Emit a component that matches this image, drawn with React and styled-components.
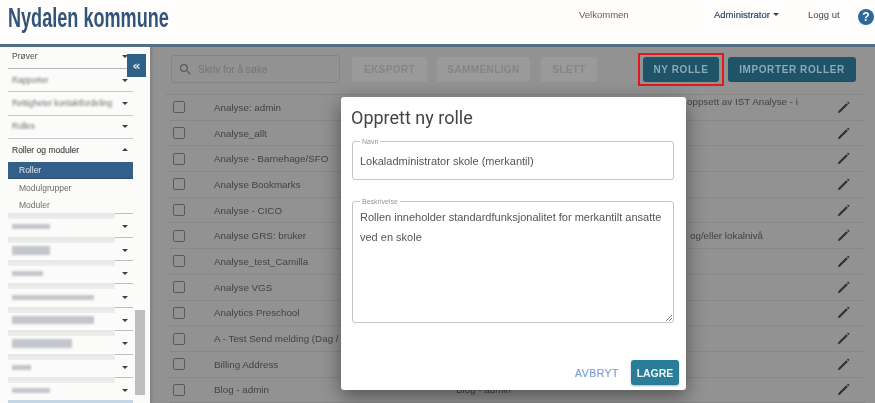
import React from "react";
import styled, { createGlobalStyle } from "styled-components";

const Global = createGlobalStyle`
  html, body { margin: 0; padding: 0; background: #fff; }
  body { font-family: "Liberation Sans", Arial, sans-serif; }
`;

const Page = styled.div`
  position: relative;
  width: 875px;
  height: 403px;
  overflow: hidden;
  display: flex;
  flex-direction: column;
  filter: blur(0.45px);
  background: #fff;
`;

const Header = styled.header`
  height: 44px;
  flex: none;
  display: flex;
  align-items: center;
  padding: 0 1px 0 8px;
  border-bottom: 3px solid #4f7088;
  background: #fffefc;
`;

const Brand = styled.div`
  font-size: 27px;
  font-weight: 700;
  color: #34557a;
  width: 160px;
  white-space: nowrap;
  transform-origin: left center;
  transform: scaleX(0.67);
  margin-top: -7px;
`;

const Welcome = styled.div`
  margin-left: 411px;
  width: 135px;
  font-size: 9.5px;
  color: #5e5e5e;
  margin-top: -16px;
`;

const AdminMenu = styled.div`
  display: flex;
  align-items: center;
  gap: 3px;
  width: 94px;
  font-size: 9.5px;
  color: #2e4a68;
  -webkit-text-stroke: 0.2px #2e4a68;
  margin-top: -16px;
`;

const Caret = styled.span`
  width: 0;
  height: 0;
  border-left: 3.5px solid transparent;
  border-right: 3.5px solid transparent;
  border-top: ${(p) => (p.$up ? "0" : "3.5px solid #3a3f48")};
  border-bottom: ${(p) => (p.$up ? "3.5px solid #3a3f48" : "0")};
`;

const Logout = styled.div`
  width: 50px;
  font-size: 9.5px;
  color: #3a4658;
  margin-top: -16px;
`;

const Help = styled.div`
  width: 16px;
  height: 16px;
  border-radius: 50%;
  background: #2d6a9a;
  color: #fff;
  font-size: 12px;
  font-weight: 700;
  display: flex;
  align-items: center;
  justify-content: center;
  margin-top: -10px;
`;

const Body = styled.div`
  flex: 1;
  display: flex;
  min-height: 0;
  position: relative;
`;

const Sidebar = styled.aside`
  width: 150px;
  flex: none;
  display: flex;
  background: #fbfbfa;
  position: relative;
  padding: 0 0 0 8px;
  box-sizing: border-box;
`;

const NavList = styled.nav`
  width: 125px;
  flex: none;
  display: flex;
  flex-direction: column;
  font-size: 8.5px;
  color: #4a4a4a;
`;

const NavItem = styled.div`
  height: ${(p) => p.$h || 23.4}px;
  flex: none;
  box-sizing: border-box;
  display: flex;
  align-items: center;
  justify-content: space-between;
  padding: 0 5px ${(p) => p.$lift || 0}px 4px;
  border-bottom: 1px solid ${(p) => (p.$strong ? "#b5b8b8" : "#c6c9c9")};
  white-space: nowrap;
`;

const RedactedItem = styled.div`
  height: 23.4px;
  flex: none;
  box-sizing: border-box;
  display: flex;
  align-items: center;
  justify-content: space-between;
  padding: 4px 5px 0 4px;
  background:
    linear-gradient(#e6e7e8, #eeeeee) left top / 107px 6px no-repeat,
    linear-gradient(#bcbfbf, #bcbfbf) right top / 18px 1px no-repeat;
`;

const NavGroup = styled.div`
  height: 23px;
  flex: none;
  display: flex;
  align-items: center;
  justify-content: space-between;
  padding: 0 5px 2px 4px;
  box-sizing: border-box;
  color: #4a4a4a;
  -webkit-text-stroke: 0.15px #4a4a4a;
`;

const SubItem = styled.div`
  height: 17px;
  flex: none;
  display: flex;
  align-items: center;
  padding-left: 11px;
  box-sizing: border-box;
  color: ${(p) => (p.$active ? "#e4ebf2" : "#6d6d6d")};
  background: ${(p) => (p.$active ? "#32608a" : "transparent")};
  border-bottom: ${(p) => (p.$active ? "1px solid #2c4c6a" : "none")};
`;

const NavEnd = styled.div`
  height: 12px;
  flex: none;
  background: #c5d7e6;
`;

const Faded = styled.span`
  filter: blur(0.8px);
  color: #707070;
  font-size: 8.2px;
`;

const Smudge = styled.span`
  display: block;
  width: ${(p) => p.$w}px;
  height: ${(p) => p.$h || 5}px;
  background: #c3c6cc;
  filter: blur(1px);
`;

const Track = styled.div`
  width: 10px;
  flex: none;
  margin-left: 2px;
  padding-top: 263px;
`;

const Thumb = styled.div`
  height: 85px;
  background: #bdbdbd;
`;

const Collapse = styled.button`
  position: absolute;
  left: 127px;
  top: 7px;
  width: 19px;
  height: 23px;
  z-index: 3;
  padding: 0;
  border: 0;
  background: #2f6088;
  color: #dfe7ee;
  font-size: 13px;
  font-weight: 700;
  line-height: 18px;
  font-family: "DejaVu Sans", sans-serif;
`;

const Main = styled.main`
  flex: 1;
  min-width: 0;
  background: #929292;
  box-shadow: inset 4px 0 3px -2px #808080;
  padding: 0 10px 0 19px;
  position: relative;
`;

const Toolbar = styled.div`
  height: 48px;
  display: flex;
  align-items: center;
  border-bottom: 1px solid #888;
  margin: 0 0 0 -4px;
  padding: 0 0 3px 6px;
  box-sizing: border-box;
`;

const Search = styled.div`
  width: 169px;
  height: 28px;
  border: 1px solid #848484;
  border-radius: 3px;
  display: flex;
  align-items: center;
  gap: 5px;
  padding-left: 6px;
  box-sizing: border-box;
  color: #757575;
  font-size: 10px;
  margin-right: 12px;
  filter: blur(0.3px);
`;

const GhostBtn = styled.div`
  width: ${(p) => p.$w}px;
  margin-right: ${(p) => p.$mr}px;
  height: 25px;
  background: #9a9a9a;
  border-radius: 3px;
  color: #858585;
  font-size: 10px;
  font-weight: 700;
  letter-spacing: 0.4px;
  display: flex;
  align-items: center;
  justify-content: center;
`;

const PrimaryBtn = styled.div`
  width: ${(p) => p.$w}px;
  height: 25px;
  background: #1e5368;
  border-radius: 3px;
  color: #8aaab4;
  font-size: 10px;
  font-weight: 700;
  letter-spacing: 0.6px;
  display: flex;
  align-items: center;
  justify-content: center;
`;

const Highlight = styled.div`
  border: 2px solid #e0191c;
  padding: 2px 3px;
  margin-right: 4px;
  display: flex;
`;

const Row = styled.div`
  height: 25.7px;
  box-sizing: border-box;
  display: flex;
  align-items: center;
  border-bottom: 1px solid #888;
  font-size: 9.8px;
  color: #434343;
  white-space: nowrap;
`;

const Check = styled.span`
  width: 12px;
  height: 12px;
  flex: none;
  box-sizing: border-box;
  border: 1.5px solid #5a5a5a;
  border-radius: 2px;
  margin: 0 29px 0 4px;
`;

const Name = styled.span`
  width: 238px;
  flex: none;
`;

const Desc = styled.span`
  flex: 1;
  padding-left: ${(p) => p.$at || 0}px;
  margin-bottom: ${(p) => p.$lift || 0}px;
`;

const Edit = styled.svg`
  width: 15px;
  height: 15px;
  flex: none;
  margin-right: 14px;
  fill: #303030;
`;

const Layer = styled.div`
  position: absolute;
  left: 341px;
  top: 97px;
  z-index: 5;
`;

const Dialog = styled.section`
  width: 345px;
  height: 293px;
  box-sizing: border-box;
  background: #fff;
  border-radius: 3px;
  box-shadow: 0 6px 20px rgba(0, 0, 0, 0.45);
  padding: 11px 7px 5px 11px;
  display: flex;
  flex-direction: column;
`;

const Title = styled.h2`
  margin: 0 0 0 -1px;
  font-family: Roboto, sans-serif;
  font-size: 18px;
  line-height: 20px;
  font-weight: 400;
  color: #444;
`;

const Field = styled.div`
  position: relative;
  width: 322px;
  height: ${(p) => p.$h}px;
  margin-top: ${(p) => p.$mt}px;
  box-sizing: border-box;
  border: 1px solid #c4c4c4;
  border-radius: 3px;
  padding: ${(p) => p.$pad};
  font-size: 11px;
  line-height: 20px;
  color: #555;
`;

const Legend = styled.span`
  position: absolute;
  left: 7px;
  top: -5px;
  padding: 0 2px;
  background: #fff;
  font-size: 7px;
  line-height: 9px;
  color: #959595;
`;

const Grip = styled.svg`
  position: absolute;
  right: 1px;
  bottom: 1px;
  width: 7px;
  height: 7px;
  stroke: #888;
`;

const Actions = styled.div`
  margin-top: auto;
  display: flex;
  justify-content: flex-end;
  align-items: center;
  gap: 12px;
`;

const Cancel = styled.div`
  font-size: 10.5px;
  letter-spacing: 0.5px;
  color: #7ea0d4;
  -webkit-text-stroke: 0.2px #7ea0d4;
`;

const Save = styled.div`
  width: 48px;
  height: 25px;
  border-radius: 3px;
  background: #2a7d98;
  color: #eef6f8;
  font-size: 10.5px;
  font-weight: 700;
  display: flex;
  align-items: center;
  justify-content: center;
  box-shadow: 0 1px 2px rgba(0, 0, 0, 0.3);
`;

const rows = [
  ["Analyse: admin", "oppsett av IST Analyse - i", 235, 12],
  ["Analyse_allt"],
  ["Analyse - Barnehage/SFO"],
  ["Analyse Bookmarks"],
  ["Analyse - CICO"],
  ["Analyse GRS: bruker", "og/eller lokalnivå", 238, 0],
  ["Analyse_test_Camilla"],
  ["Analyse VGS"],
  ["Analytics Preschool"],
  ["A - Test Send melding (Dag / Natt)"],
  ["Billing Address"],
  ["Blog - admin", "Blog - admin", 4, 0],
];

const smudges = [
  [38, 5],
  [38, 9],
  [31, 5],
  [82, 5],
  [82, 8],
  [60, 9],
  [19, 5],
  [38, 5],
];

const Pencil = () => (
  <Edit viewBox="0 0 24 24">
    <path d="M3 21l1-3.5L16.5 5l2.5 2.5L6.5 20z" />
    <path d="M17.6 3.9l1-1c.4-.4 1-.4 1.4 0l1.1 1.1c.4.4.4 1 0 1.4l-1 1z" />
  </Edit>
);

export default function App() {
  return (
    <>
      <Global />
      <Page>
        <Header>
          <Brand>Nydalen kommune</Brand>
          <Welcome>Velkommen</Welcome>
          <AdminMenu>
            Administrator <Caret />
          </AdminMenu>
          <Logout>Logg ut</Logout>
          <Help>?</Help>
        </Header>
        <Body>
          <Sidebar>
            <NavList>
              <NavItem $h={22} $lift={3} $strong>
                <span>Prøver</span>
                <Caret />
              </NavItem>
              <NavItem>
                <Faded>Rapporter</Faded>
                <Caret />
              </NavItem>
              <NavItem>
                <Faded>Rettigheter kontaktfordeling</Faded>
                <Caret />
              </NavItem>
              <NavItem>
                <Faded>Rolles</Faded>
                <Caret />
              </NavItem>
              <NavGroup>
                <span>Roller og moduler</span>
                <Caret $up />
              </NavGroup>
              <SubItem $active>Roller</SubItem>
              <SubItem>Modulgrupper</SubItem>
              <SubItem>Moduler</SubItem>
              {smudges.map(([w, h], i) => (
                <RedactedItem key={i}>
                  <Smudge $w={w} $h={h} />
                  <Caret />
                </RedactedItem>
              ))}
              <NavEnd />
            </NavList>
            <Track>
              <Thumb />
            </Track>
            <Collapse aria-label="Skjul meny">«</Collapse>
          </Sidebar>
          <Main>
            <Toolbar>
              <Search>
                <svg width="15" height="15" viewBox="0 0 24 24" fill="#5c5c5c">
                  <path d="M15.5 14h-.79l-.28-.27A6.47 6.47 0 0 0 16 9.5 6.5 6.5 0 1 0 9.5 16c1.61 0 3.09-.59 4.23-1.57l.27.28v.79l5 4.99L20.49 19l-4.99-5zm-6 0C7.01 14 5 11.99 5 9.5S7.01 5 9.5 5 14 7.01 14 9.5 11.99 14 9.5 14z" />
                </svg>
                Skriv for å søke
              </Search>
              <GhostBtn $w={75} $mr={10}>EKSPORT</GhostBtn>
              <GhostBtn $w={93} $mr={11}>SAMMENLIGN</GhostBtn>
              <GhostBtn $w={56} $mr={41}>SLETT</GhostBtn>
              <Highlight>
                <PrimaryBtn $w={76}>NY ROLLE</PrimaryBtn>
              </Highlight>
              <PrimaryBtn $w={128}>IMPORTER ROLLER</PrimaryBtn>
            </Toolbar>
            {rows.map(([name, desc, at, lift]) => (
              <Row key={name}>
                <Check />
                <Name>{name}</Name>
                <Desc $at={at} $lift={lift}>{desc}</Desc>
                <Pencil />
              </Row>
            ))}
          </Main>
        </Body>
        <Layer>
          <Dialog>
            <Title>Opprett ny rolle</Title>
            <Field $h={39} $mt={13} $pad="9px 7px">
              <Legend>Navn</Legend>
              Lokaladministrator skole (merkantil)
            </Field>
            <Field $h={122} $mt={21} $pad="5px 7px">
              <Legend>Beskrivelse</Legend>
              Rollen inneholder standardfunksjonalitet for merkantilt ansatte ved en skole
              <Grip viewBox="0 0 7 7">
                <path d="M1 7L7 1M4 7L7 4" />
              </Grip>
            </Field>
            <Actions>
              <Cancel>AVBRYT</Cancel>
              <Save>LAGRE</Save>
            </Actions>
          </Dialog>
        </Layer>
      </Page>
    </>
  );
}
